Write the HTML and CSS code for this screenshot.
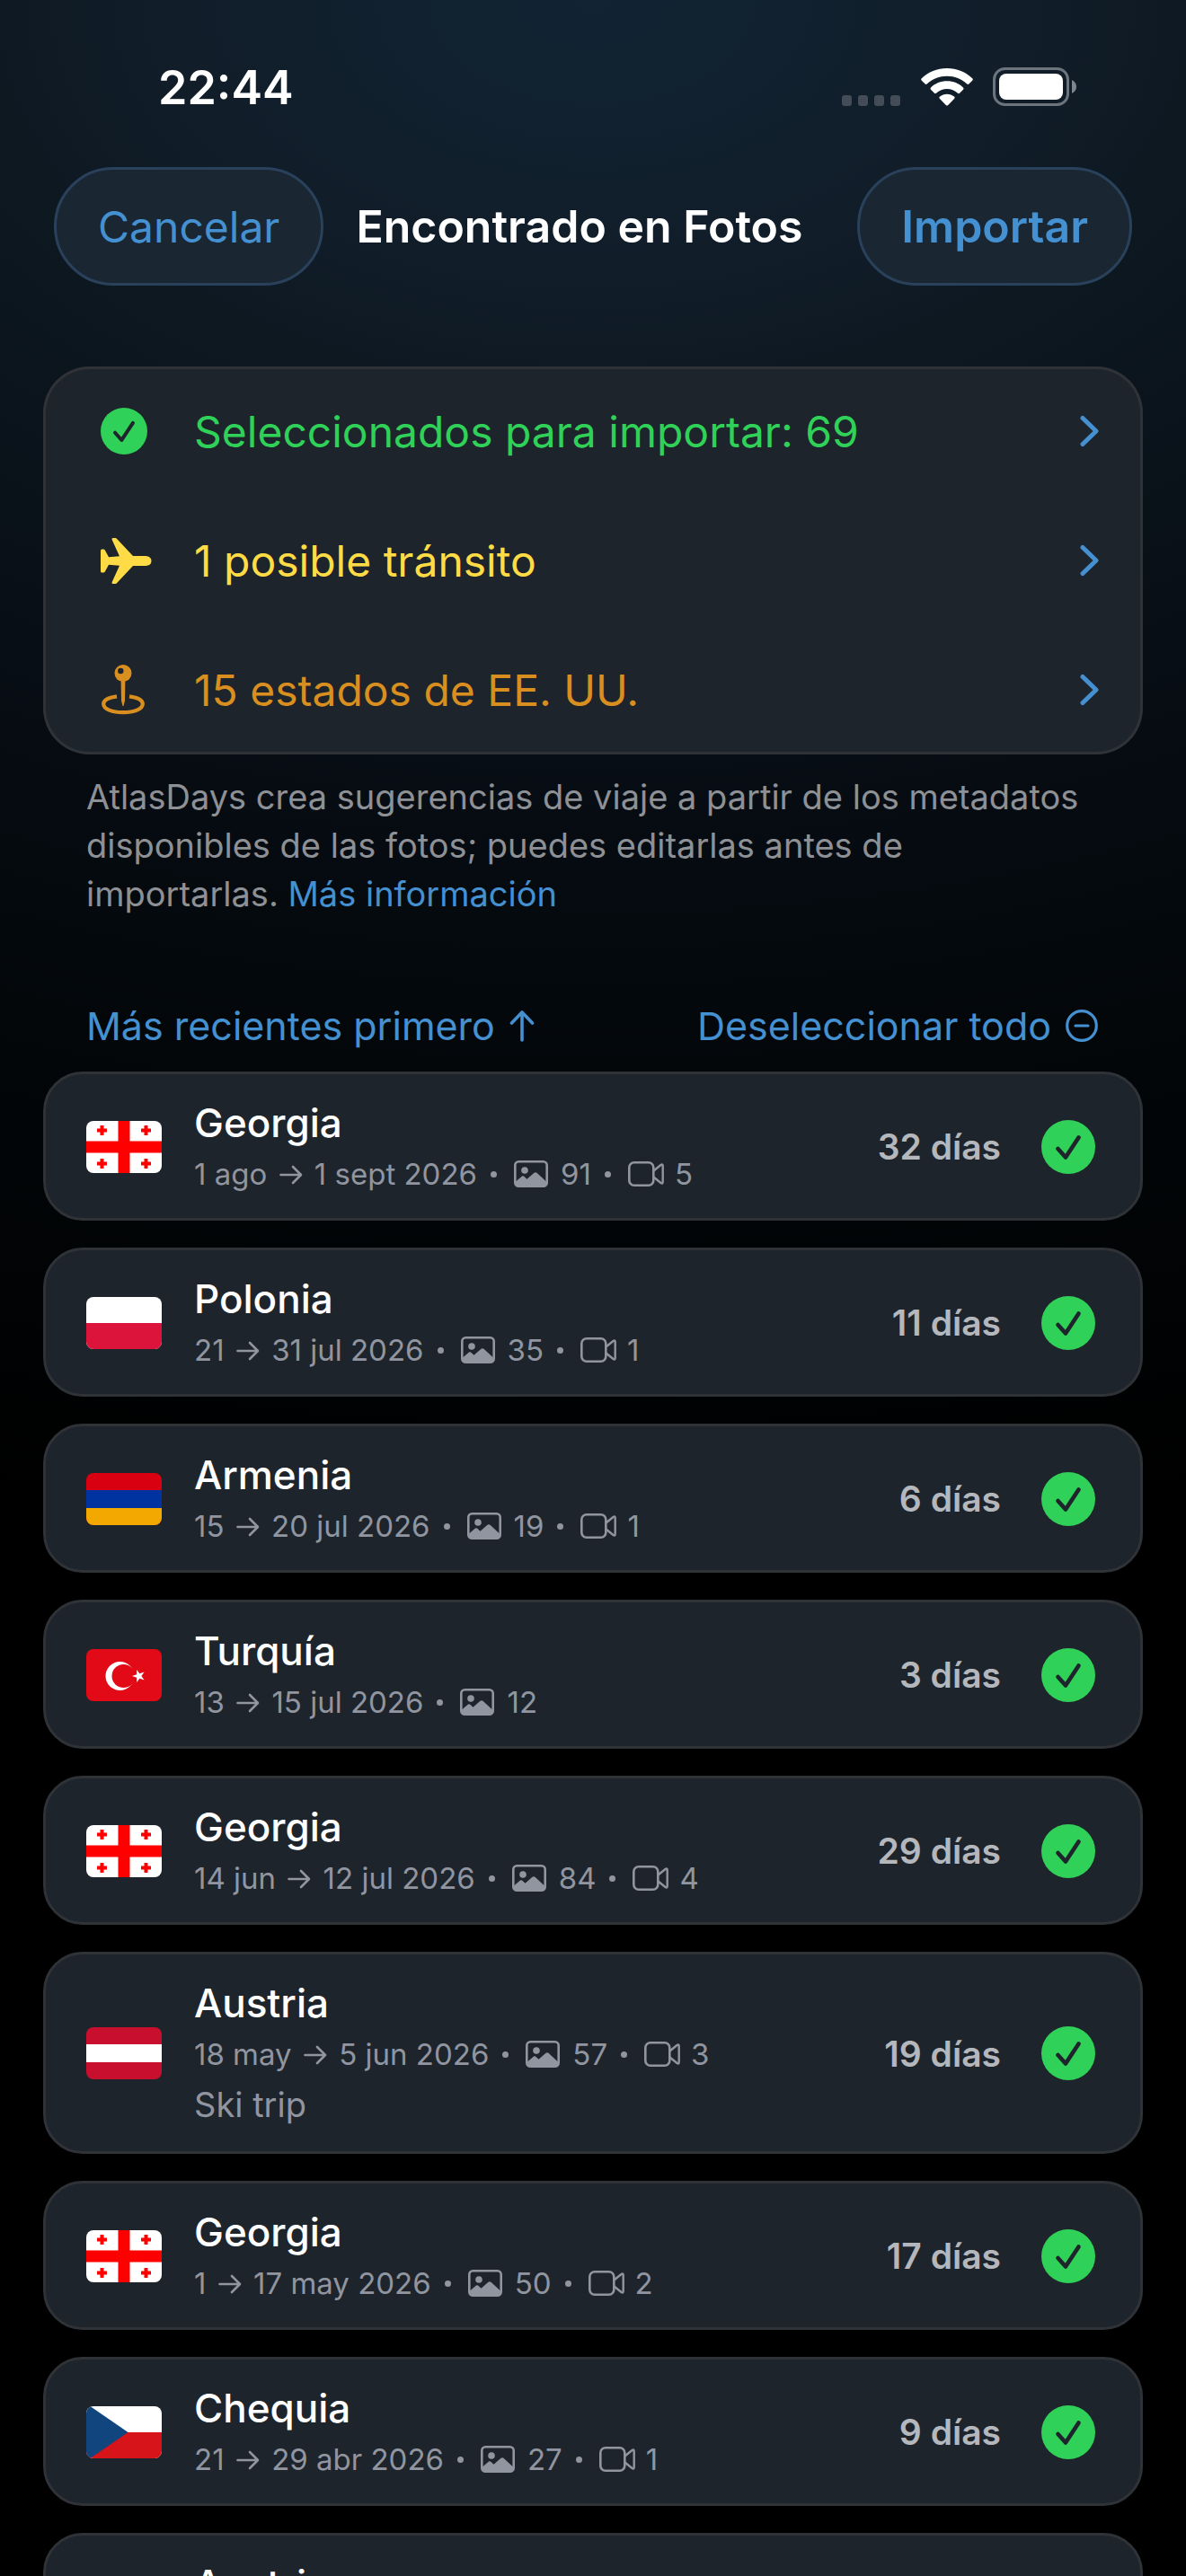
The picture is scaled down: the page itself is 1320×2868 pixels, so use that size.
FILE: index.html
```
<!DOCTYPE html>
<html lang="es">

<head>
    <meta charset="UTF-8">
    <meta name="viewport" content="width=device-width, initial-scale=1.0">
    <title>Encontrado en Fotos</title>
    <link rel="stylesheet" href="styles.css">
</head>

<body>
    <!-- Shared icons and flags -->
    <svg class="sprite" aria-hidden="true">
        <symbol id="check" viewBox="0 0 60 60">
            <circle cx="30" cy="30" r="30" fill="#30d158" />
            <path d="M18.500 32 L27 41.500 L41.500 19.500" fill="none" stroke="#1e242b" stroke-width="4.600" stroke-linecap="round" stroke-linejoin="round" />
        </symbol>
        <symbol id="chevron" viewBox="0 0 22 36">
            <path d="M3 3.500 L18 18 L3 32.500" fill="none" stroke="currentColor" stroke-width="5" stroke-linecap="round" stroke-linejoin="round" />
        </symbol>
        <symbol id="arrow" viewBox="0 0 26 22">
            <path d="M1.500 11 H23.500 M15 2 L24 11 L15 20" fill="none" stroke="currentColor" stroke-width="2.600" stroke-linecap="round" stroke-linejoin="round" />
        </symbol>
        <symbol id="photo" viewBox="0 0 38 30">
            <rect x="1.300" y="1.300" width="35.400" height="27.400" rx="4" fill="none" stroke="currentColor" stroke-width="2.600" />
            <circle cx="12" cy="11" r="3.800" fill="currentColor" />
            <path d="M2 23.500 L9 17.500 Q10 16.800 11 17.600 L14.500 20.800 L22.500 13.800 Q24 12.700 25.500 13.800 L36.500 24 V26 Q36.500 29 33 29 H5 Q2 29 2 26 Z" fill="currentColor" />
        </symbol>
        <symbol id="video" viewBox="0 0 40 28">
            <rect x="1.300" y="1.300" width="27" height="25.400" rx="5.500" fill="none" stroke="currentColor" stroke-width="2.600" />
            <path d="M28.500 10.500 L36.500 4 Q38.700 2.600 38.700 5.200 V22.800 Q38.700 25.400 36.500 24 L28.500 17.500" fill="none" stroke="currentColor" stroke-width="2.400" stroke-linejoin="round" />
        </symbol>
        <symbol id="flag-georgia" viewBox="0 0 84 58">
            <rect width="84" height="58" fill="#fff" />
            <path d="M35.500 0 h13 v58 h-13 Z M0 22.500 h84 v13 h-84 Z" fill="#f00" />
            <path d="M17.500 5 v11 M12 10.500 h11 M66.500 5 v11 M61 10.500 h11 M17.500 42 v11 M12 47.500 h11 M66.500 42 v11 M61 47.500 h11" stroke="#f00" stroke-width="4" />
        </symbol>
        <symbol id="flag-poland" viewBox="0 0 84 58">
            <rect width="84" height="58" fill="#fff" />
            <rect y="29" width="84" height="29" fill="#dc143c" />
        </symbol>
        <symbol id="flag-armenia" viewBox="0 0 84 58">
            <rect width="84" height="58" fill="#d90012" />
            <rect y="19" width="84" height="20" fill="#0033a0" />
            <rect y="39" width="84" height="19" fill="#f2a800" />
        </symbol>
        <symbol id="flag-turkey" viewBox="0 0 84 58">
            <rect width="84" height="58" fill="#e30a17" />
            <circle cx="37.500" cy="30" r="16" fill="#fff" />
            <circle cx="41.500" cy="30" r="13" fill="#e30a17" />
            <path d="M51 30 L56.200 28.300 L56.200 22.900 L59.400 27.300 L64.600 25.600 L61.400 30 L64.600 34.400 L59.400 32.700 L56.200 37.100 L56.200 31.700 Z" fill="#fff" />
        </symbol>
        <symbol id="flag-austria" viewBox="0 0 84 58">
            <rect width="84" height="58" fill="#c8102e" />
            <rect y="19" width="84" height="20" fill="#fff" />
        </symbol>
        <symbol id="flag-czechia" viewBox="0 0 84 58">
            <rect width="84" height="58" fill="#fff" />
            <rect y="29" width="84" height="29" fill="#d7141a" />
            <path d="M0 -3 L46.500 29 L0 61 Z" fill="#11457e" />
        </symbol>
    </svg>

    <div class="screen">
        <div class="status-bar">
            <span class="time">22:44</span>
            <div class="status-icons">
                <svg class="signal" viewBox="0 0 66 12">
                    <rect width="11" height="12" rx="3" />
                    <rect x="18" width="11" height="12" rx="3" />
                    <rect x="36" width="11" height="12" rx="3" />
                    <rect x="54" width="11" height="12" rx="3" />
                </svg>
                <svg class="wifi" viewBox="0 0 58 42">
                    <path d="M29 0 C40 0 50 4.200 57.200 11.300 Q58.400 12.500 57.200 13.700 L53.300 17.600 Q52.300 18.500 51.300 17.600 C45.300 11.800 37.400 8.700 29 8.700 C20.600 8.700 12.700 11.800 6.700 17.600 Q5.700 18.500 4.700 17.600 L0.800 13.700 Q-0.400 12.500 0.800 11.300 C8 4.200 18 0 29 0 Z" />
                    <path d="M29 14.300 C36 14.300 42.300 16.900 47 21.400 Q48.200 22.600 47 23.700 L43 27.700 Q42 28.600 41 27.700 C37.700 24.700 33.500 23 29 23 C24.500 23 20.300 24.700 17 27.700 Q16 28.600 15 27.700 L11 23.700 Q9.800 22.600 11 21.400 C15.700 16.900 22 14.300 29 14.300 Z" />
                    <path d="M29 28.700 C32 28.700 34.800 29.800 37 31.600 Q38.300 32.700 37 34 L30.200 41 Q29 42.200 27.800 41 L21 34 Q19.700 32.700 21 31.600 C23.200 29.800 26 28.700 29 28.700 Z" />
                </svg>
                <svg class="battery" viewBox="0 0 94 43">
                    <rect x="1.500" y="1.500" width="82" height="40" rx="12" fill="none" stroke="#6c757d" stroke-width="3" />
                    <rect x="7" y="7" width="71" height="29" rx="8" fill="#fff" />
                    <path d="M88 14 Q93 16.500 93 21.500 Q93 26.500 88 29 Z" fill="#7d868d" />
                </svg>
            </div>
        </div>

        <header class="nav">
            <button class="pill" type="button">Cancelar</button>
            <h1>Encontrado en Fotos</h1>
            <button class="pill pill-strong" type="button">Importar</button>
        </header>

        <main>
            <div class="summary">
                <button class="summary-row green" type="button">
                    <span class="summary-icon"><svg width="52" height="52"><use href="#check" /></svg></span>
                    <span class="summary-text">Seleccionados para importar: 69</span>
                    <svg class="chevron"><use href="#chevron" /></svg>
                </button>
                <button class="summary-row yellow" type="button">
                    <span class="summary-icon">
                        <svg width="57" height="51" viewBox="0 0 57 51">
                            <path d="M0 14 Q0 12.500 1.500 12.500 H3 Q4.200 12.500 4.800 13.500 L9 21.300 L21 20.300 L12.600 1.800 Q12 0 13.700 0 H16.200 Q17.500 0 18.400 1.200 L36 20 H50 Q56.500 20.500 56.500 25.500 Q56.500 30.500 50 31 H36 L18.400 49.800 Q17.500 51 16.200 51 H13.700 Q12 51 12.600 49.200 L21 30.700 L9 29.700 L4.800 37.500 Q4.200 38.500 3 38.500 H1.500 Q0 38.500 0 37 Z" fill="currentColor" />
                        </svg>
                    </span>
                    <span class="summary-text">1 posible tránsito</span>
                    <svg class="chevron"><use href="#chevron" /></svg>
                </button>
                <button class="summary-row orange" type="button">
                    <span class="summary-icon">
                        <svg width="50" height="56" viewBox="0 0 50 56">
                            <path d="M18 35.300 C9 36.500 3.200 39.500 3.200 43.800 C3.200 49.500 12.800 53.200 25 53.200 C37.200 53.200 46.800 49.500 46.800 43.800 C46.800 39.500 41 36.500 32 35.300" fill="none" stroke="currentColor" stroke-width="4.200" />
                            <path d="M22.600 17 H27.400 L27 40 L25.500 46 H24.500 L23 40 Z" fill="currentColor" />
                            <circle cx="25" cy="9.500" r="9.500" fill="currentColor" />
                            <circle cx="22.300" cy="7" r="3.200" fill="#1e242b" />
                        </svg>
                    </span>
                    <span class="summary-text">15 estados de EE. UU.</span>
                    <svg class="chevron"><use href="#chevron" /></svg>
                </button>
            </div>

            <p class="note">AtlasDays crea sugerencias de viaje a partir de los metadatos disponibles de las fotos; puedes editarlas antes de importarlas. <a href="#">Más información</a></p>

            <div class="toolbar">
                <button type="button">Más recientes primero
                    <svg width="28" height="36" viewBox="0 0 28 36"><path d="M14 34 V3 M2.500 15 L14 3 L25.500 15" fill="none" stroke="currentColor" stroke-width="3.600" stroke-linecap="round" stroke-linejoin="round" /></svg>
                </button>
                <button type="button">Deseleccionar todo
                    <svg width="36" height="36" viewBox="0 0 36 36"><circle cx="18" cy="18" r="16.300" fill="none" stroke="currentColor" stroke-width="3.200" /><path d="M11 18 H25" stroke="currentColor" stroke-width="3.200" stroke-linecap="round" /></svg>
                </button>
            </div>

            <ul class="trips">
                <li class="trip">
                    <svg class="flag"><use href="#flag-georgia" /></svg>
                    <div class="trip-info">
                        <h2>Georgia</h2>
                        <div class="meta">
                            <span>1 ago <svg class="arrow"><use href="#arrow" /></svg> 1 sept 2026</span>
                            <i class="dot"></i>
                            <svg class="photo"><use href="#photo" /></svg><span>91</span>
                            <i class="dot"></i>
                            <svg class="video"><use href="#video" /></svg><span>5</span>
                        </div>
                    </div>
                    <span class="days">32 días</span>
                    <label class="check"><input type="checkbox" aria-label="Georgia" checked><svg><use href="#check" /></svg></label>
                </li>
                <li class="trip">
                    <svg class="flag"><use href="#flag-poland" /></svg>
                    <div class="trip-info">
                        <h2>Polonia</h2>
                        <div class="meta">
                            <span>21 <svg class="arrow"><use href="#arrow" /></svg> 31 jul 2026</span>
                            <i class="dot"></i>
                            <svg class="photo"><use href="#photo" /></svg><span>35</span>
                            <i class="dot"></i>
                            <svg class="video"><use href="#video" /></svg><span>1</span>
                        </div>
                    </div>
                    <span class="days">11 días</span>
                    <label class="check"><input type="checkbox" aria-label="Polonia" checked><svg><use href="#check" /></svg></label>
                </li>
                <li class="trip">
                    <svg class="flag"><use href="#flag-armenia" /></svg>
                    <div class="trip-info">
                        <h2>Armenia</h2>
                        <div class="meta">
                            <span>15 <svg class="arrow"><use href="#arrow" /></svg> 20 jul 2026</span>
                            <i class="dot"></i>
                            <svg class="photo"><use href="#photo" /></svg><span>19</span>
                            <i class="dot"></i>
                            <svg class="video"><use href="#video" /></svg><span>1</span>
                        </div>
                    </div>
                    <span class="days">6 días</span>
                    <label class="check"><input type="checkbox" aria-label="Armenia" checked><svg><use href="#check" /></svg></label>
                </li>
                <li class="trip">
                    <svg class="flag"><use href="#flag-turkey" /></svg>
                    <div class="trip-info">
                        <h2>Turquía</h2>
                        <div class="meta">
                            <span>13 <svg class="arrow"><use href="#arrow" /></svg> 15 jul 2026</span>
                            <i class="dot"></i>
                            <svg class="photo"><use href="#photo" /></svg><span>12</span>
                        </div>
                    </div>
                    <span class="days">3 días</span>
                    <label class="check"><input type="checkbox" aria-label="Turquía" checked><svg><use href="#check" /></svg></label>
                </li>
                <li class="trip">
                    <svg class="flag"><use href="#flag-georgia" /></svg>
                    <div class="trip-info">
                        <h2>Georgia</h2>
                        <div class="meta">
                            <span>14 jun <svg class="arrow"><use href="#arrow" /></svg> 12 jul 2026</span>
                            <i class="dot"></i>
                            <svg class="photo"><use href="#photo" /></svg><span>84</span>
                            <i class="dot"></i>
                            <svg class="video"><use href="#video" /></svg><span>4</span>
                        </div>
                    </div>
                    <span class="days">29 días</span>
                    <label class="check"><input type="checkbox" aria-label="Georgia" checked><svg><use href="#check" /></svg></label>
                </li>
                <li class="trip">
                    <svg class="flag"><use href="#flag-austria" /></svg>
                    <div class="trip-info">
                        <h2>Austria</h2>
                        <div class="meta">
                            <span>18 may <svg class="arrow"><use href="#arrow" /></svg> 5 jun 2026</span>
                            <i class="dot"></i>
                            <svg class="photo"><use href="#photo" /></svg><span>57</span>
                            <i class="dot"></i>
                            <svg class="video"><use href="#video" /></svg><span>3</span>
                        </div>
                        <p class="trip-note">Ski trip</p>
                    </div>
                    <span class="days">19 días</span>
                    <label class="check"><input type="checkbox" aria-label="Austria" checked><svg><use href="#check" /></svg></label>
                </li>
                <li class="trip">
                    <svg class="flag"><use href="#flag-georgia" /></svg>
                    <div class="trip-info">
                        <h2>Georgia</h2>
                        <div class="meta">
                            <span>1 <svg class="arrow"><use href="#arrow" /></svg> 17 may 2026</span>
                            <i class="dot"></i>
                            <svg class="photo"><use href="#photo" /></svg><span>50</span>
                            <i class="dot"></i>
                            <svg class="video"><use href="#video" /></svg><span>2</span>
                        </div>
                    </div>
                    <span class="days">17 días</span>
                    <label class="check"><input type="checkbox" aria-label="Georgia" checked><svg><use href="#check" /></svg></label>
                </li>
                <li class="trip">
                    <svg class="flag"><use href="#flag-czechia" /></svg>
                    <div class="trip-info">
                        <h2>Chequia</h2>
                        <div class="meta">
                            <span>21 <svg class="arrow"><use href="#arrow" /></svg> 29 abr 2026</span>
                            <i class="dot"></i>
                            <svg class="photo"><use href="#photo" /></svg><span>27</span>
                            <i class="dot"></i>
                            <svg class="video"><use href="#video" /></svg><span>1</span>
                        </div>
                    </div>
                    <span class="days">9 días</span>
                    <label class="check"><input type="checkbox" aria-label="Chequia" checked><svg><use href="#check" /></svg></label>
                </li>
                <li class="trip">
                    <svg class="flag"><use href="#flag-austria" /></svg>
                    <div class="trip-info">
                        <h2>Austria</h2>
                        <div class="meta"></div>
                    </div>
                </li>
            </ul>
        </main>
    </div>
</body>

</html>
```

FILE: styles.css
```
* {
    box-sizing: border-box;
}

body {
    margin: 0;
    background: #000;
    color: #fff;
    font-family: Inter, "Liberation Sans", sans-serif;
}

h1,
h2,
p,
ul {
    margin: 0;
    padding: 0;
}

button {
    border: 0;
    padding: 0;
    background: none;
    color: inherit;
    font: inherit;
    cursor: pointer;
}

.sprite {
    display: none;
}

.screen {
    height: 100vh;
    padding: 66px 48px 0;
    overflow: hidden;
    background: radial-gradient(2800px 1800px at 50% 0, #112433 0%, #111d29 17%, #0d1821 25%, #070d14 48%, #03070a 66%, #000 95%);
}

/* status bar */
.status-bar {
    display: flex;
    justify-content: space-between;
    padding: 0 73px 0 128px;
}

.time {
    font-size: 52px;
    font-weight: 600;
    line-height: 64px;
}

.status-icons {
    display: flex;
    align-items: flex-end;
    gap: 22px;
    padding-bottom: 12px;
}

.signal {
    width: 66px;
    height: 12px;
    fill: #434c57;
}

.wifi {
    width: 58px;
    height: 42px;
    fill: #fff;
}

.battery {
    width: 94px;
    height: 43px;
}

/* title bar */
.nav {
    display: flex;
    align-items: center;
    gap: 36px;
    margin-top: 56px;
    padding: 0 12px;
}

.nav h1 {
    font-size: 50px;
    font-weight: 600;
    white-space: nowrap;
}

.pill {
    height: 132px;
    padding: 0 46px;
    border: 3px solid #29415b;
    border-radius: 66px;
    background: #1a2632;
    color: #4490d0;
    font-size: 48px;
}

.pill-strong {
    margin-left: auto;
    font-size: 50px;
    font-weight: 600;
}

/* summary */
.summary {
    margin-top: 90px;
    border-radius: 52px;
    background: #1e242b;
    box-shadow: inset 0 0 0 3px #2f3338;
}

.summary-row {
    display: flex;
    align-items: center;
    gap: 36px;
    width: 100%;
    height: 144px;
    padding: 0 48px;
    font-size: 48px;
    text-align: left;
}

.summary-icon {
    display: flex;
    width: 84px;
    padding-left: 16px;
}

.summary-text {
    flex: 1;
}

.chevron {
    width: 22px;
    height: 36px;
    color: #4490d0;
}

.green {
    color: #30d158;
}

.yellow {
    color: #ffdc45;
}

.orange {
    color: #d98f1f;
}

.note {
    margin-top: 20px;
    padding: 0 48px;
    color: #8d9095;
    font-size: 38px;
    line-height: 54px;
}

.note a {
    color: #4490d0;
    text-decoration: none;
}

.toolbar {
    display: flex;
    justify-content: space-between;
    margin-top: 93px;
    padding: 0 50px 0 48px;
    color: #4490d0;
    font-size: 43px;
    line-height: 54px;
}

.toolbar button {
    display: flex;
    align-items: center;
    gap: 16px;
}

/* trips */
.trips {
    display: flex;
    flex-direction: column;
    gap: 30px;
    margin-top: 24px;
    list-style: none;
}

.trip {
    display: flex;
    align-items: center;
    padding: 26px 50px 25px 45px;
    border: 3px solid #2f3338;
    border-radius: 44px;
    background: #1e242b;
}

.flag {
    width: 84px;
    height: 58px;
    border-radius: 8px;
}

.trip-info {
    flex: 1;
    margin-left: 36px;
}

.trip h2 {
    font-size: 44px;
    font-weight: 500;
    line-height: 56px;
}

.meta {
    display: flex;
    align-items: center;
    height: 48px;
    margin-top: 5px;
    color: #9095a0;
    font-size: 33px;
    line-height: 48px;
}

.arrow {
    width: 26px;
    height: 22px;
    margin: 0 4px;
}

.dot {
    width: 7px;
    height: 7px;
    margin: 0 19px 0 15px;
    border-radius: 50%;
    background: #9095a0;
}

.photo {
    width: 38px;
    height: 30px;
    margin-right: 14px;
}

.video {
    width: 40px;
    height: 28px;
    margin-right: 12px;
}

.trip-note {
    margin-top: 6px;
    color: #9095a0;
    font-size: 38px;
    line-height: 53px;
}

.days {
    margin-right: 45px;
    color: #b4b7bb;
    font-size: 39px;
    font-weight: 600;
}

.check {
    display: flex;
    position: relative;
    cursor: pointer;
}

.check input {
    position: absolute;
    inset: 0;
    margin: 0;
    opacity: 0;
}

.check svg {
    width: 60px;
    height: 60px;
}
```
